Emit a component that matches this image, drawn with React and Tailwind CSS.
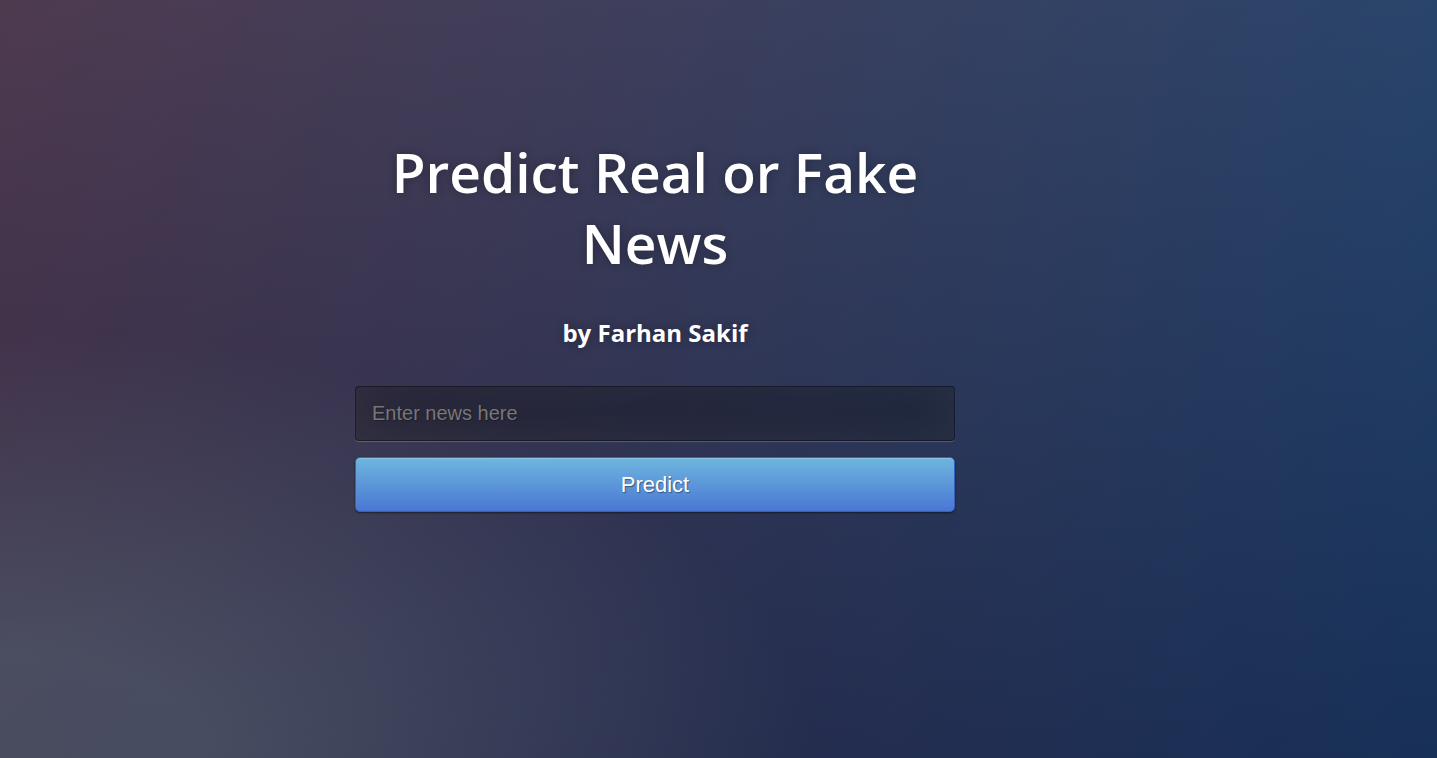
import React from "react";

const bg =
  "bg-[radial-gradient(ellipse_at_0%_100%,rgba(104,128,138,.4)_10%,rgba(138,114,76,0)_40%),linear-gradient(to_bottom,rgba(57,173,219,.25)_0%,rgba(42,60,87,.4)_100%),linear-gradient(135deg,#551421_0%,#0b2858_100%)]";

export default function App() {
  return (
    <div
      className={`min-h-[758px] w-full bg-[#092756] ${bg} flex flex-col items-start pt-[136px] pl-[355px] font-['Open_Sans',sans-serif]`}
    >
      <div className="w-[600px] flex flex-col">
        <h1 className="text-white text-center text-[55px] leading-[71px] font-semibold [text-shadow:0_0_10px_rgba(0,0,0,0.3)]">
          Predict Real or Fake News
        </h1>
        <p className="mt-[40px] text-white text-center text-[24px] leading-[30px] font-bold [text-shadow:0_0_10px_rgba(0,0,0,0.3)]">
          by Farhan Sakif
        </p>
        <form className="mt-[38px] flex flex-col gap-4" onSubmit={(e) => e.preventDefault()}>
          <input
            type="text"
            placeholder="Enter news here"
            className="w-full h-[55px] px-4 rounded-[4px] bg-black/30 border border-black/30 text-white text-[20px] font-['Liberation_Sans',Arial,sans-serif] placeholder:text-[#777] outline-none [text-shadow:1px_1px_1px_rgba(0,0,0,0.3)] shadow-[inset_0_-5px_45px_rgba(100,100,100,0.2),0_1px_1px_rgba(255,255,255,0.2)]"
          />
          <button
            type="submit"
            className="w-full h-[55px] rounded-[5px] border border-[#3762bc] bg-[linear-gradient(to_bottom,#6eb6de,#4a77d4)] text-white text-[22px] font-['Liberation_Sans',Arial,sans-serif] [text-shadow:1px_1px_1px_rgba(0,0,0,0.4)] shadow-[inset_0_1px_0_rgba(255,255,255,0.2),0_1px_2px_rgba(0,0,0,0.5)]"
          >
            Predict
          </button>
        </form>
      </div>
    </div>
  );
}
